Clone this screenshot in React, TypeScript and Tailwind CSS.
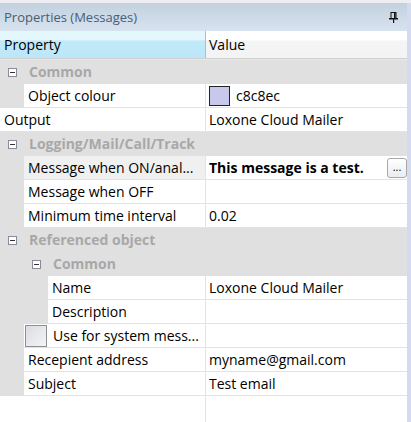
import React from "react";

const font = { fontFamily: '"Open Sans", "Noto Sans", sans-serif' };

function MinusBox() {
  return (
    <span className="flex h-[9px] w-[9px] items-center justify-center border border-[#8a8a9a] bg-white">
      <span className="h-px w-[5px] bg-[#333]" />
    </span>
  );
}

function Category({ label, level = 0 }: { label: string; level?: number }) {
  return (
    <div className="flex h-6 items-center bg-[#e0e0e0]">
      <div className={level === 0 ? "flex w-6 justify-center pl-[1px]" : "flex w-[48px] justify-end pr-[7px]"}>
        <MinusBox />
      </div>
      <span className="pl-[5px] font-bold text-[#a8a8a8]">{label}</span>
    </div>
  );
}

function Row({
  label,
  value,
  level = 1,
  labelBg = "bg-white",
}: {
  label: React.ReactNode;
  value?: React.ReactNode;
  level?: number;
  labelBg?: string;
}) {
  const pad = level === 0 ? "" : level === 1 ? "w-6" : "w-[48px]";
  return (
    <div className="flex h-6 bg-[#e0e0e0]">
      {pad && <div className={pad + " shrink-0"} />}
      <div className={"flex min-w-0 flex-1 border-b border-[#e3e3e3] " + labelBg}>
        <div className="flex min-w-0 flex-1 items-center whitespace-nowrap pl-[4px]">{label}</div>
      </div>
      <div className="flex w-[202px] shrink-0 items-center border-b border-l border-[#e3e3e3] bg-white pl-[3px]">
        {value}
      </div>
    </div>
  );
}

export default function App() {
  return (
    <div className="flex h-[422px] w-[411px] flex-col overflow-hidden bg-white text-[14px] leading-none text-black" style={font}>
      <div className="h-[3px] bg-[#eeeef2]" />
      <div className="flex min-h-0 flex-1">
        <div className="flex w-[407px] flex-col">
          {/* title bar */}
          <div className="flex h-[28px] items-center justify-between bg-gradient-to-b from-[#c3d1df] to-[#d7e3ef] pl-[4px] pr-[9px]">
            <span className="text-[13px] text-[#4a5d74]">Properties (Messages)</span>
            <svg width="9" height="11" viewBox="0 0 9 11" className="mt-[1px]">
              <rect x="2" y="0.5" width="5" height="6" fill="none" stroke="#111" />
              <rect x="5" y="1" width="1.5" height="5" fill="#111" />
              <rect x="0" y="6" width="9" height="1.5" fill="#111" />
              <rect x="4" y="7" width="1.2" height="4" fill="#111" />
            </svg>
          </div>
          {/* column headers */}
          <div className="flex h-[28px] border-b border-[#d0d0d0]">
            <div className="flex w-[206px] items-center border-r border-[#90c8e2] bg-[linear-gradient(to_bottom,#e4f7fd_0%,#e4f7fd_34%,#c0e9f9_36%,#bde7f8_100%)] pl-[4px]">
              Property
            </div>
            <div className="flex flex-1 items-center bg-[linear-gradient(to_bottom,#ffffff_0%,#ffffff_34%,#f5f5f6_36%,#f3f3f4_100%)] pl-[3px]">
              Value
            </div>
          </div>
          <div className="h-[1px] bg-[#e8e8e8]" />
          <Category label="Common" />
          <Row
            label="Object colour"
            value={
              <span className="flex items-center">
                <span className="mr-[6px] h-[20px] w-[21px] border border-[#222] bg-[#c8c8ec]" />
                c8c8ec
              </span>
            }
          />
          <Row label="Output" level={0} value="Loxone Cloud Mailer" />
          <Category label="Logging/Mail/Call/Track" />
          <Row
            label="Message when ON/anal..."
            labelBg="bg-[#f0f0f0]"
            value={
              <div className="flex flex-1 items-center justify-between">
                <span className="font-bold">This message is a test.</span>
                <span className="flex h-[20px] w-[20px] items-end justify-center rounded-[3px] border border-[#a8a8a8] bg-gradient-to-b from-white to-[#ececec] pb-[5px] text-[11px]">
                  ...
                </span>
              </div>
            }
          />
          <Row label="Message when OFF" />
          <Row label="Minimum time interval" value="0.02" />
          <Category label="Referenced object" />
          <Category label="Common" level={1} />
          <Row label="Name" level={2} value="Loxone Cloud Mailer" />
          <Row label="Description" level={2} />
          <Row
            label={
              <span className="flex items-center">
                <span className="ml-[-3px] mr-[6px] h-[22px] w-[22px] border border-[#8f8f8f] bg-gradient-to-br from-[#dadde2] to-[#f4f4f6]" />
                Use for system mess...
              </span>
            }
          />
          <Row label="Recepient address" value="myname@gmail.com" />
          <Row label="Subject" value="Test email" />
          <div className="flex flex-1">
            <div className="w-[206px] border-r border-[#e3e3e3]" />
            <div className="flex-1" />
          </div>
        </div>
        <div className="w-[4px] bg-[#d4daf0]" />
      </div>
    </div>
  );
}
